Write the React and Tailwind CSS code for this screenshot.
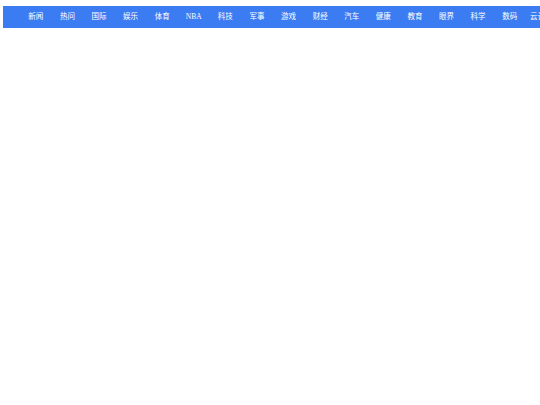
import React from 'react';

const channels = [
  '新闻', '热问', '国际', '娱乐', '体育', 'NBA', '科技', '军事', '游戏',
  '财经', '汽车', '健康', '教育', '眼界', '科学', '数码', '云计算', '文化',
];

const App = () => {
  return (
    <div className="w-[540px] h-[405px] overflow-hidden bg-white">
      <div className="mt-[6px] ml-[3px] flex h-[22px] w-max items-center bg-[#3b7cf2] pl-[17px] pr-4">
        {channels.map(name => (
          <a
            key={name}
            href="#"
            className="w-[31.6px] shrink-0 whitespace-nowrap text-center text-[7.5px] leading-none text-white"
            style={{ fontFamily: '"Liberation Serif", "Noto Sans CJK SC", serif' }}
          >
            {name}
          </a>
        ))}
      </div>
    </div>
  );
};

export default App;
